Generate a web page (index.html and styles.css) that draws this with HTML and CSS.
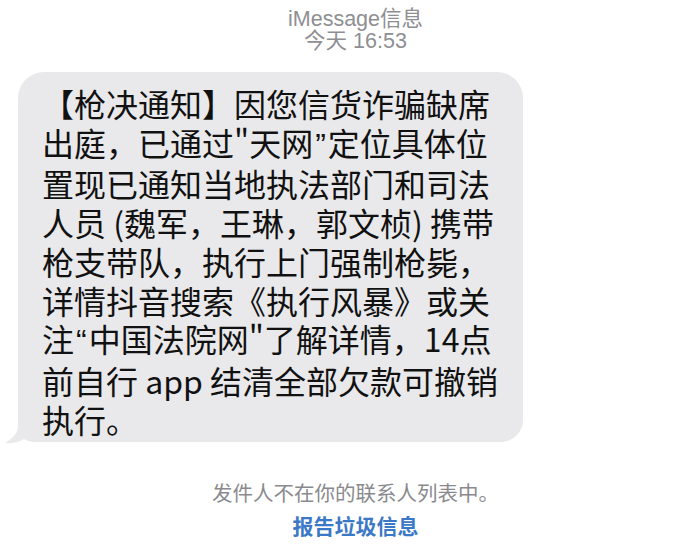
FILE: index.html
```html
<!DOCTYPE html>
<html lang="zh-CN">
<head>
<meta charset="utf-8">
<link rel="stylesheet" href="styles.css">
</head>
<body>
<div class="screen">
  <div class="header">
    <div class="service">iMessage信息</div>
    <div class="time">今天 16:53</div>
  </div>
  <div class="thread">
    <div class="bubble">
      <svg class="tail" width="30" height="24" viewBox="0 0 30 24"><path d="M13 0 L13 6 C13 12 9 18 0 23 C8 24 14 22 19 19 C22 21 26 22 30 22 L30 0 Z" fill="#e9e9eb"/></svg>
      <div class="text">
        <span class="line">【枪决通知】因您信货诈骗缺席</span>
        <span class="line">出庭，已通过"天网<span class="q">”</span>定位具体位</span>
        <span class="line">置现已通知当地执法部门和司法</span>
        <span class="line">人员 (魏军，王琳，郭文桢) 携带</span>
        <span class="line">枪支带队，执行上门强制枪毙，</span>
        <span class="line">详情抖音搜索《执行风暴》或关</span>
        <span class="line">注<span class="q">“</span>中国法院网"了解详情，14点</span>
        <span class="line">前自行 app 结清全部欠款可撤销</span>
        <span class="line">执行。</span>
      </div>
    </div>
  </div>
  <div class="notice">发件人不在你的联系人列表中。</div>
  <div class="report">报告垃圾信息</div>
</div>
</body>
</html>
```
FILE: styles.css
```css
html, body {
  margin: 0;
  padding: 0;
  background: #ffffff;
}
.screen {
  width: 693px;
  height: 560px;
  box-sizing: border-box;
  padding: 8px 0 0 18px;
  font-family: "Noto Sans CJK SC", "Noto Sans", sans-serif;
  display: flex;
  flex-direction: column;
  align-items: center;
  overflow: hidden;
}
.header {
  display: flex;
  flex-direction: column;
  align-items: center;
  color: #8e8e93;
  font-size: 21.5px;
  line-height: 22px;
  font-family: "Liberation Sans", "Noto Sans CJK SC", sans-serif;
}
.thread {
  align-self: stretch;
  margin-top: 20px;
  display: flex;
}
.bubble {
  position: relative;
  width: 505px;
  height: 370px;
  box-sizing: border-box;
  background: #e9e9eb;
  border-radius: 26px 26px 22px 20px;
  padding: 12px 0 0 24px;
}
.tail {
  position: absolute;
  left: -13px;
  bottom: -2px;
  display: block;
}
.text {
  position: relative;
  font-size: 32px;
  line-height: 38.7px;
  color: #111111;
  white-space: nowrap;
}
.line {
  display: block;
}
.q {
  font-family: "Liberation Sans", sans-serif;
  padding: 0 2px;
}
.notice {
  margin-top: 37px;
  font-size: 20.5px;
  line-height: 26px;
  color: #8a8a8e;
}
.report {
  margin-top: 7px;
  font-size: 21px;
  line-height: 26px;
  font-weight: 700;
  color: #3b79c6;
}
```
